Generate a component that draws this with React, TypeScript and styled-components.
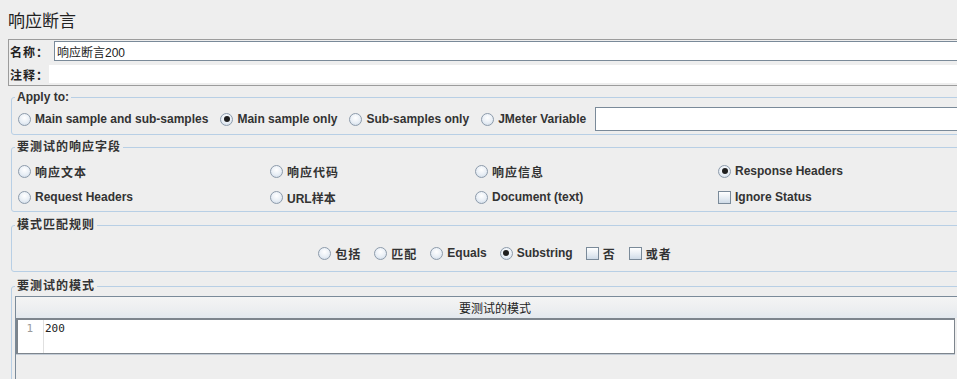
import styled, { createGlobalStyle, css } from "styled-components";

const GlobalStyle = createGlobalStyle`
  html, body {
    margin: 0;
    padding: 0;
    background: #eeeeee;
    overflow: hidden;
  }
  body {
    font-family: "Liberation Sans", "Noto Sans CJK SC", sans-serif;
    font-size: 12px;
    color: #333333;
  }
`;

type Choice = {
  label: string;
  checked?: boolean;
  box?: boolean;
  cjk?: boolean;
};

const applyOptions: Choice[] = [
  { label: "Main sample and sub-samples" },
  { label: "Main sample only", checked: true },
  { label: "Sub-samples only" },
  { label: "JMeter Variable" },
];

const fieldOptions: Choice[] = [
  { label: "响应文本", cjk: true },
  { label: "响应代码", cjk: true },
  { label: "响应信息", cjk: true },
  { label: "Response Headers", checked: true },
  { label: "Request Headers" },
  { label: "URL样本" },
  { label: "Document (text)" },
  { label: "Ignore Status", box: true },
];

const matchOptions: Choice[] = [
  { label: "包括", cjk: true },
  { label: "匹配", cjk: true },
  { label: "Equals" },
  { label: "Substring", checked: true },
  { label: "否", box: true, cjk: true },
  { label: "或者", box: true, cjk: true },
];

const OptionItem = ({ label, checked, box, cjk }: Choice) => (
  <S.Option $cjk={cjk}>
    {box ? <S.CheckMark /> : <S.RadioMark $checked={checked} />}
    <span>{label}</span>
  </S.Option>
);

const App = () => {
  return (
    <>
      <GlobalStyle />
      <S.Page>
        <S.Title>响应断言</S.Title>

        <S.NamePanel>
          <S.NameRow $pad="1px 0">
            <S.NameLabel $width={45}>名称：</S.NameLabel>
            <S.TextInput defaultValue="响应断言200" readOnly />
          </S.NameRow>
          <S.NameRow $pad="3px 0 2px">
            <S.NameLabel $width={40}>注释：</S.NameLabel>
            <S.CommentField />
          </S.NameRow>
        </S.NamePanel>

        <S.Group $top={4}>
          <S.Legend>Apply to:</S.Legend>
          <S.ApplyRow>
            {applyOptions.map((o) => (
              <OptionItem key={o.label} {...o} />
            ))}
            <S.VariableInput readOnly />
          </S.ApplyRow>
        </S.Group>

        <S.Group $top={5}>
          <S.Legend $cjk>要测试的响应字段</S.Legend>
          <S.FieldGrid>
            {fieldOptions.map((o) => (
              <OptionItem key={o.label} {...o} />
            ))}
          </S.FieldGrid>
        </S.Group>

        <S.Group $top={6}>
          <S.Legend $cjk>模式匹配规则</S.Legend>
          <S.MatchRow>
            {matchOptions.map((o) => (
              <OptionItem key={o.label} {...o} />
            ))}
          </S.MatchRow>
        </S.Group>

        <S.Group $top={7}>
          <S.Legend $cjk>要测试的模式</S.Legend>
          <S.Table>
            <S.TableHeader>要测试的模式</S.TableHeader>
            <S.Editor>
              <S.Gutter>1</S.Gutter>
              <S.Code>200</S.Code>
            </S.Editor>
          </S.Table>
        </S.Group>
      </S.Page>
    </>
  );
};

const S = {
  Page: styled.div`
    width: 980px;
    height: 100vh;
    overflow: hidden;
    display: flex;
    flex-direction: column;
  `,

  Title: styled.div`
    flex: none;
    height: 36px;
    padding: 2px 0 0 8px;
    font-family: "Noto Sans CJK SC", sans-serif;
    font-size: 17px;
    line-height: 36px;
    color: #222;
  `,

  NamePanel: styled.div`
    flex: none;
    margin: 1px 0 0 8px;
    border: 1px solid #9c9c9c;
    border-right: none;
    display: flex;
    flex-direction: column;
  `,

  NameRow: styled.div<{ $pad: string }>`
    display: flex;
    align-items: center;
    padding: ${(p) => p.$pad};
  `,

  NameLabel: styled.span<{ $width: number }>`
    width: ${(p) => p.$width}px;
    flex: none;
    padding-left: 1px;
    box-sizing: border-box;
    font-weight: bold;
    letter-spacing: 1px;
    white-space: nowrap;
    color: #222;
  `,

  TextInput: styled.input`
    flex: 1;
    height: 20px;
    box-sizing: border-box;
    margin: 0;
    border: 1px solid #7a8a99;
    border-right: none;
    padding: 0 2px;
    background: #ffffff;
    font-family: "Liberation Sans", "Noto Sans CJK SC", sans-serif;
    font-size: 12px;
    color: #222;
    outline: none;
  `,

  CommentField: styled.div`
    flex: 1;
    height: 18px;
    background: #ffffff;
  `,

  Group: styled.fieldset<{ $top: number }>`
    flex: none;
    margin: ${(p) => p.$top}px 1px 0 11px;
    border: 1px solid #b8cfe5;
    border-radius: 3px;
    padding: 0 3px;
    min-width: 0;
  `,

  Legend: styled.legend<{ $cjk?: boolean }>`
    margin: 0;
    padding: 0 2px;
    height: 14px;
    line-height: 14px;
    font-weight: bold;
    font-size: 12px;
    color: #333;
    letter-spacing: ${(p) => (p.$cjk ? "1px" : "0")};
  `,

  Option: styled.label<{ $cjk?: boolean }>`
    display: flex;
    align-items: center;
    gap: 4px;
    white-space: nowrap;
    font-weight: bold;
    color: #333;
    letter-spacing: ${(p) => (p.$cjk ? "1px" : "0")};
  `,

  RadioMark: styled.span<{ $checked?: boolean }>`
    position: relative;
    flex: none;
    width: 13px;
    height: 13px;
    box-sizing: border-box;
    border-radius: 50%;
    border: 1px solid #8d9bab;
    background: radial-gradient(
      circle at 50% 35%,
      #ffffff 0%,
      #e8eef5 55%,
      #c8d6e4 100%
    );

    ${(p) =>
      p.$checked &&
      css`
        &::after {
          content: "";
          position: absolute;
          left: 2.5px;
          top: 2.5px;
          width: 6px;
          height: 6px;
          border-radius: 50%;
          background: #1e1e1e;
        }
      `}
  `,

  CheckMark: styled.span`
    flex: none;
    width: 13px;
    height: 13px;
    box-sizing: border-box;
    border: 1px solid #7a8a99;
    background: linear-gradient(180deg, #ffffff 0%, #e4ebf2 60%, #cfdbe7 100%);
  `,

  ApplyRow: styled.div`
    display: flex;
    align-items: center;
    gap: 12px;
    height: 24px;
    padding: 3px 0 3px 3px;
  `,

  VariableInput: styled.input`
    flex: 1;
    height: 24px;
    box-sizing: border-box;
    margin: 0 0 0 -3px;
    border: 1px solid #7a8a99;
    border-right: none;
    background: #ffffff;
    outline: none;
  `,

  FieldGrid: styled.div`
    display: grid;
    grid-template-columns: 252px 205px 243px 1fr;
    grid-auto-rows: 26px;
    align-items: center;
    padding: 4px 0 1px 3px;
  `,

  MatchRow: styled.div`
    display: flex;
    justify-content: center;
    align-items: center;
    gap: 13px;
    height: 24px;
    padding: 9px 0 6px;
  `,

  Table: styled.div`
    margin-top: 3px;
    height: 100px;
    border: 1px solid #7a8a99;
    border-bottom: none;
    display: flex;
    flex-direction: column;
  `,

  TableHeader: styled.div`
    height: 21px;
    line-height: 22px;
    text-align: center;
    font-family: "Noto Sans CJK SC", sans-serif;
    font-size: 12px;
    color: #222;
    background: linear-gradient(180deg, #f4f4f4 0%, #eceef0 60%, #e2e8ee 100%);
  `,

  Editor: styled.div`
    display: flex;
    height: 36px;
    box-sizing: border-box;
    margin-right: 19px;
    border: 1px solid #7d858d;
    border-width: 2px 1px 1px 2px;
    background: #ffffff;
    box-shadow: 0 1px 0 #c3ccd6;
  `,

  Gutter: styled.div`
    width: 26px;
    flex: none;
    padding: 2px 10px 0 0;
    box-sizing: border-box;
    border-right: 1px solid #e0e0e0;
    text-align: right;
    font-family: "DejaVu Sans Mono", monospace;
    font-size: 11px;
    line-height: 14px;
    color: #9a9a9a;
  `,

  Code: styled.div`
    padding: 2px 0 0 1px;
    font-family: "DejaVu Sans Mono", monospace;
    font-size: 11px;
    line-height: 14px;
    color: #222;
  `,
};

export default App;
